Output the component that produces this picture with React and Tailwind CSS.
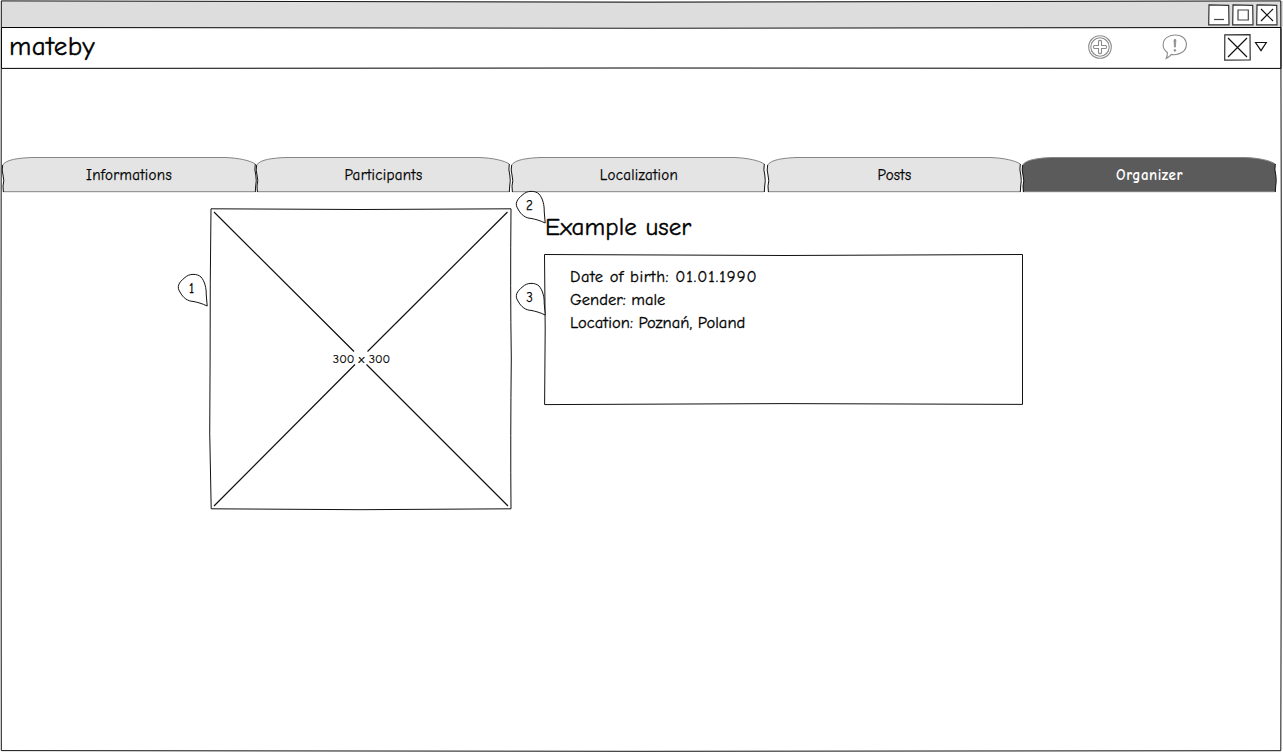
const INK = "#111111";

function Sketch({ w, h, children, className = "" }) {
  return (
    <svg
      width={w}
      height={h}
      viewBox={`0 0 ${w} ${h}`}
      fill="none"
      stroke={INK}
      strokeWidth="1"
      className={`pointer-events-none absolute left-0 top-0 overflow-visible ${className}`}
      aria-hidden="true"
    >
      {children}
    </svg>
  );
}

function WindowButton({ children }) {
  return (
    <svg width="22" height="22" viewBox="0 0 22 22" fill="none" stroke={INK} strokeWidth="1.2" className="shrink-0">
      <path d="M1 .9L20.7 1.3L21 20.8L.7 20.8Z" fill="#fff" stroke="#333" />
      {children}
    </svg>
  );
}

function TitleBar() {
  return (
    <div className="flex h-[26px] items-start justify-end gap-[2px] bg-[#dddddd] pr-[5px] pt-[3px]">
      <WindowButton><path d="M6 15.5H16" stroke="#444" /></WindowButton>
      <WindowButton><path d="M6 6H16.3V16H6Z" stroke="#444" /></WindowButton>
      <WindowButton><path d="M5 5L17 17M17 5L5 17" /></WindowButton>
    </div>
  );
}

function AddIcon() {
  return (
    <svg width="24" height="24" viewBox="0 0 24 24" fill="none" stroke="#8c8c8c" strokeWidth="1.1">
      <circle cx="12" cy="12" r="11.3" />
      <circle cx="12" cy="12" r="9.2" />
      <path d="M10.5 6Q12 4.8 13.5 6V10.5H18Q19.2 12 18 13.5H13.5V18Q12 19.2 10.5 18V13.5H6Q4.8 12 6 10.5H10.5Z" />
    </svg>
  );
}

function AlertIcon() {
  return (
    <svg width="26" height="26" viewBox="0 0 26 26" fill="none" stroke="#8c8c8c" strokeWidth="1.1">
      <path d="M5.4 18.5C-.6 14.5 0 6.5 5.4 3.1C9.8.4 16.5 .2 20.6 3C26.2 7.3 25.3 15.1 19.8 18.5C16.3 20.6 12.4 21.1 9.4 20.4Q7.5 23 4.2 24.4Q5.6 21.5 5.4 18.5Z" />
      <path d="M12 5.8Q13 4.9 13.9 5.8L13.4 13.1H12.5Z" fill="#8c8c8c" strokeWidth=".8" />
      <circle cx="12.9" cy="16.4" r=".9" fill="#8c8c8c" strokeWidth=".8" />
    </svg>
  );
}

function Header() {
  return (
    <header className="relative flex h-[41px] w-[1280px] items-center bg-white pb-px pl-2">
      <Sketch w={1280} h={41}>
        <path d="M.5 .5L640 1.2L1280 .5L1280 41.4L640 41L.5 41.4Z" stroke="#000" />
      </Sketch>
      <h1 className="text-[27px] leading-8 tracking-[0.5px] [-webkit-text-stroke:0.4px]">mateby</h1>
      <div className="ml-auto flex items-center">
        <span className="mr-[50px]"><AddIcon /></span>
        <span className="mr-[36px]"><AlertIcon /></span>
        <svg width="27" height="27" viewBox="0 0 27 27" fill="none" stroke={INK} strokeWidth="1.2" className="mr-[3px] mt-px">
          <path d="M.8 .8L26 .6L26.2 26L.7 26.1Z" stroke="#333" />
          <path d="M4 4L23 23M23 4L4 23" />
        </svg>
        <svg width="14" height="12" viewBox="0 0 14 12" fill="none" stroke={INK} strokeWidth="1.2" className="mr-[13px]">
          <path d="M1.5 1.5H12.3L7 9.7Z" />
        </svg>
      </div>
    </header>
  );
}

function Tab({ label, active }) {
  return (
    <div
      role="tab"
      aria-selected={!!active}
      className={`relative flex h-[36px] items-center justify-center text-[15px] ${active ? "font-bold tracking-[0.5px] text-white" : "tracking-[0.3px] text-black [-webkit-text-stroke:0.25px]"}`}
    >
      <Sketch w={255} h={36}>
        <path
          d="M1 35V29Q2.2 24 1 18Q-.8 12 .7 8C4 2.5 17 1 30 .5H223C237 1 248 3.5 253.3 7Q252.6 13 253.8 18Q254.4 26 253.3 35Z"
          fill={active ? "#5b5b5b" : "#e4e4e4"}
          stroke="none"
        />
        <path d="M.7 8C4 2.5 17 1 30 .5H223C237 1 248 3.5 253.3 7M1 34.7H253.3" stroke="#858585" />
        <path d="M.7 8Q-.5 13 1 18Q2.6 24 1 29L1.4 35M253.3 7Q252.2 13 253.8 18Q254.8 24 253.7 29L253.3 35" />
      </Sketch>
      <span className="relative">{label}</span>
    </div>
  );
}

function Marker({ n, className }) {
  return (
    <div className={`absolute h-[32px] w-[31px] text-[13px] leading-[29px] tracking-normal [-webkit-text-stroke:0.25px] ${className}`}>
      <Sketch w={31} h={32}>
        <path
          d="M8 3.5C12-.5 20-.7 24 3C28 7.4 29.4 15 29.2 20L30.2 32C25 29.5 21 28.4 16 27.4C11 27.3 6 24 3 18C-.5 13 1.5 8.5 8 3.5Z"
          fill="#fff"
        />
      </Sketch>
      <span className="absolute left-0 top-0 w-[29px] text-center">{n}</span>
    </div>
  );
}

function Photo() {
  return (
    <div className="relative flex h-[302px] w-[303px] items-center justify-center">
      <Sketch w={303} h={302}>
        <path d="M1 .8L150 1.5L301 .8Q300.2 80 301.3 150Q300.4 230 301 300.8L150 301.7L1.2 300.8Q-1.2 225 .1 150Q0 75 1 .8Z" />
        <path d="M4 4L144 143.5M297.5 4L157.5 143.5M4 298L145 156.5M298 298L156.5 156.5" strokeWidth="1.2" />
      </Sketch>
      <span className="relative text-[12.5px] leading-4 [-webkit-text-stroke:0.2px]">300 x 300</span>
      <Marker n="1" className="-left-[33px] top-[66px]" />
    </div>
  );
}

function Details() {
  return (
    <div className="relative h-[152px] w-[480px] pl-[26px] pt-[11px] text-[16.5px] leading-[23px] [-webkit-text-stroke:0.3px]">
      <Sketch w={480} h={152}>
        <path d="M.5 .5L240 1.5L478.5 .5L478.5 150.4L240 149.6L.6 150.6L1.2 75Z" />
      </Sketch>
      <p className="tracking-[0.55px]">
        Date of birth: <span className="tracking-[1px]">01.01.1990</span>
      </p>
      <p>Gender: male</p>
      <p className="tracking-[0.05px]">Location: Poznań, Poland</p>
      <Marker n="3" className="-left-[29px] top-[29px]" />
    </div>
  );
}

export default function App() {
  return (
    <div className="relative h-[752px] w-[1283px] overflow-hidden bg-white pl-px pt-px font-['Comic_Sans_MS','Comic_Neue','Open_Sans',sans-serif] text-black">
      <TitleBar />
      <Header />
      <div role="tablist" className="mt-[89px] grid w-[1276px] grid-cols-[254px_255px_256px_255px_255px] pl-px">
        <Tab label="Informations" />
        <Tab label="Participants" />
        <Tab label="Localization" />
        <Tab label="Posts" />
        <Tab label="Organizer" active />
      </div>
      <main className="flex items-start gap-[31px] pl-[209px] pt-[15px]">
        <Photo />
        <section>
          <div className="relative">
            <Marker n="2" className="-left-[29px] -top-[17px]" />
            <h2 className="relative h-[46px] pl-px text-[25px] leading-[37px] tracking-[0.1px] [-webkit-text-stroke:0.4px]">Example user</h2>
          </div>
          <Details />
        </section>
      </main>
      <Sketch w={1283} h={752}>
        <path d="M1.3 .9L640 2.2L1280.8 .9L1281.6 375L1280.8 750.7L640 751.3L1.3 750.6L1 375Z" />
      </Sketch>
    </div>
  );
}
